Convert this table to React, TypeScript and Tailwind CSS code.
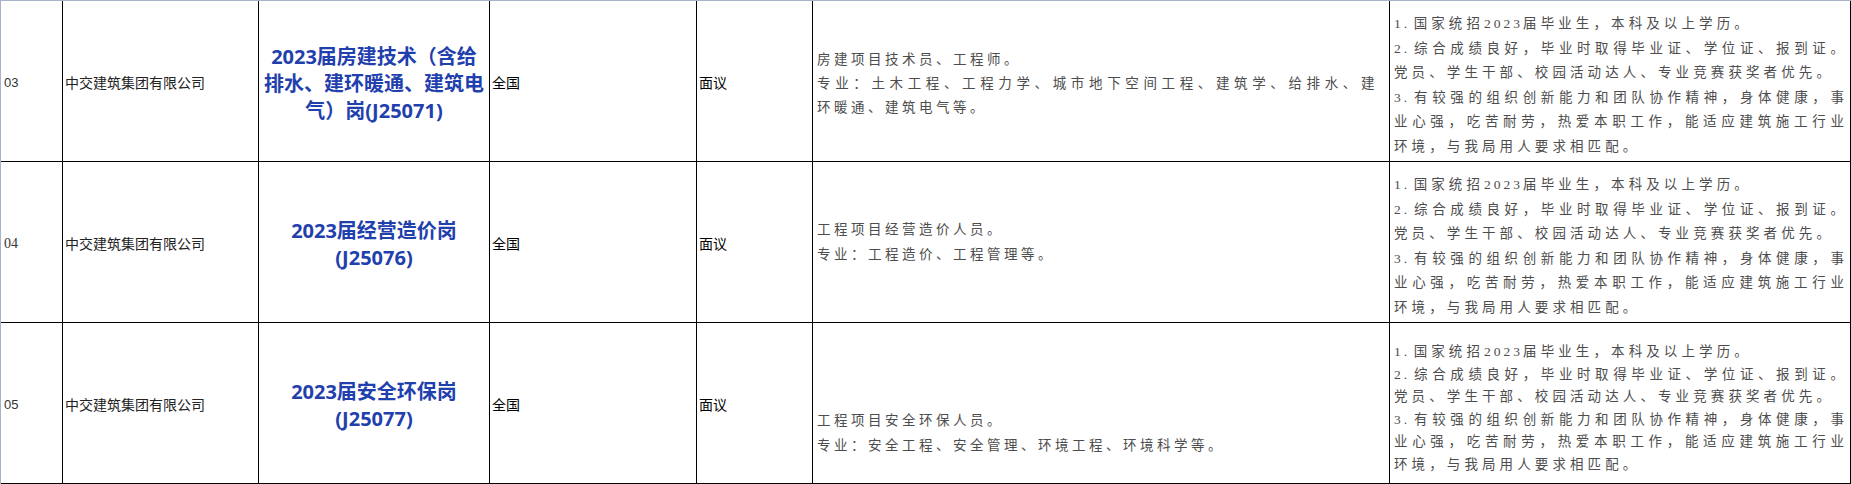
type Line = { text: string; full?: boolean };

type Job = {
  no: string;
  noClass: string;
  title: string[];
  duties: Line[];
  dutyClass: string;
  reqClass: string;
};

const CJK = "font-['Noto_Sans_CJK_SC',sans-serif]";
const SONG = "font-['Liberation_Serif','Noto_Sans_CJK_SC',serif]";

const REQUIREMENTS: Line[] = [
  { text: "1.国家统招2023届毕业生，本科及以上学历。" },
  { text: "2.综合成绩良好，毕业时取得毕业证、学位证、报到证。", full: true },
  { text: "党员、学生干部、校园活动达人、专业竞赛获奖者优先。" },
  { text: "3.有较强的组织创新能力和团队协作精神，身体健康，事", full: true },
  { text: "业心强，吃苦耐劳，热爱本职工作，能适应建筑施工行业", full: true },
  { text: "环境，与我局用人要求相匹配。" },
];

const JOBS: Job[] = [
  {
    no: "03",
    noClass: "font-['Liberation_Sans',sans-serif] text-[13px]",
    title: ["2023届房建技术（含给", "排水、建环暖通、建筑电", "气）岗(J25071)"],
    duties: [
      { text: "房建项目技术员、工程师。" },
      { text: "专业：土木工程、工程力学、城市地下空间工程、建筑学、给排水、建", full: true },
      { text: "环暖通、建筑电气等。" },
    ],
    dutyClass: "pt-[47px] leading-[24px]",
    reqClass: "pt-[11px] leading-[24.5px]",
  },
  {
    no: "04",
    noClass: "font-['Liberation_Serif',serif] text-[14px]",
    title: ["2023届经营造价岗", "(J25076)"],
    duties: [
      { text: "工程项目经营造价人员。" },
      { text: "专业：工程造价、工程管理等。" },
    ],
    dutyClass: "pt-[55px] leading-[25px]",
    reqClass: "pt-[11px] leading-[24.5px]",
  },
  {
    no: "05",
    noClass: "font-['Liberation_Sans',sans-serif] text-[13px]",
    title: ["2023届安全环保岗", "(J25077)"],
    duties: [
      { text: "工程项目安全环保人员。" },
      { text: "专业：安全工程、安全管理、环境工程、环境科学等。" },
    ],
    dutyClass: "pt-[85px] leading-[25px]",
    reqClass: "pt-[18px] leading-[22.5px]",
  },
];

const CELL = "h-[161px] border-r border-b border-black flex flex-col overflow-hidden";

// digits and the list dot in the song-style cells are half width
function SongText({ text }: { text: string }) {
  const parts = text.split(/(\d+|\.)/);
  return (
    <>
      {parts.map((p, i) =>
        p === "." ? (
          <span key={i} className="tracking-[6.5px]">
            .
          </span>
        ) : /^\d/.test(p) ? (
          <span key={i} className="tracking-[3px]">
            {p}
          </span>
        ) : (
          <span key={i}>{p}</span>
        )
      )}
    </>
  );
}

function JobRow({ job }: { job: Job }) {
  return (
    <>
      <div className={`${CELL} justify-center pl-[3px] pt-[3px] text-[#333] ${job.noClass}`}>{job.no}</div>
      <div className={`${CELL} justify-center pl-[2px] pt-[3px] text-[14px] text-[#222] ${CJK}`}>
        中交建筑集团有限公司
      </div>
      <div
        className={`${CELL} justify-center items-center pt-[4px] text-center text-[20px] font-bold leading-[27px] text-[#1f40ad] font-['Open_Sans','Noto_Sans_CJK_SC',sans-serif]`}
      >
        {job.title.map((t) => (
          <div key={t}>{t}</div>
        ))}
      </div>
      <div className={`${CELL} justify-center pl-[2px] pt-[2px] text-[14px] text-black ${CJK}`}>全国</div>
      <div className={`${CELL} justify-center pl-[2px] pt-[2px] text-[14px] text-black ${CJK}`}>面议</div>
      <div className={`${CELL} pl-[4px] text-[13.5px] tracking-[3.5px] text-[#4d4d4d] ${SONG} ${job.dutyClass}`}>
        {job.duties.map((l) => (
          <div key={l.text} className={l.full ? "w-[561px] [text-align-last:justify]" : ""}>
            {l.text}
          </div>
        ))}
      </div>
      <div className={`${CELL} pl-[4px] text-[13.5px] tracking-[4.1px] text-[#4d4d4d] ${SONG} ${job.reqClass}`}>
        {REQUIREMENTS.map((l) => (
          <div key={l.text} className={l.full ? "w-[454px] [text-align-last:justify]" : ""}>
            <SongText text={l.text} />
          </div>
        ))}
      </div>
    </>
  );
}

export default function App() {
  return (
    <div className="w-[1851px] h-[484px] bg-white border-t border-l border-[#a9b2cb] overflow-hidden">
      <div className="grid grid-cols-[62px_196px_231px_207px_116px_577px_461px]">
        {JOBS.map((job) => (
          <JobRow key={job.no} job={job} />
        ))}
      </div>
    </div>
  );
}
